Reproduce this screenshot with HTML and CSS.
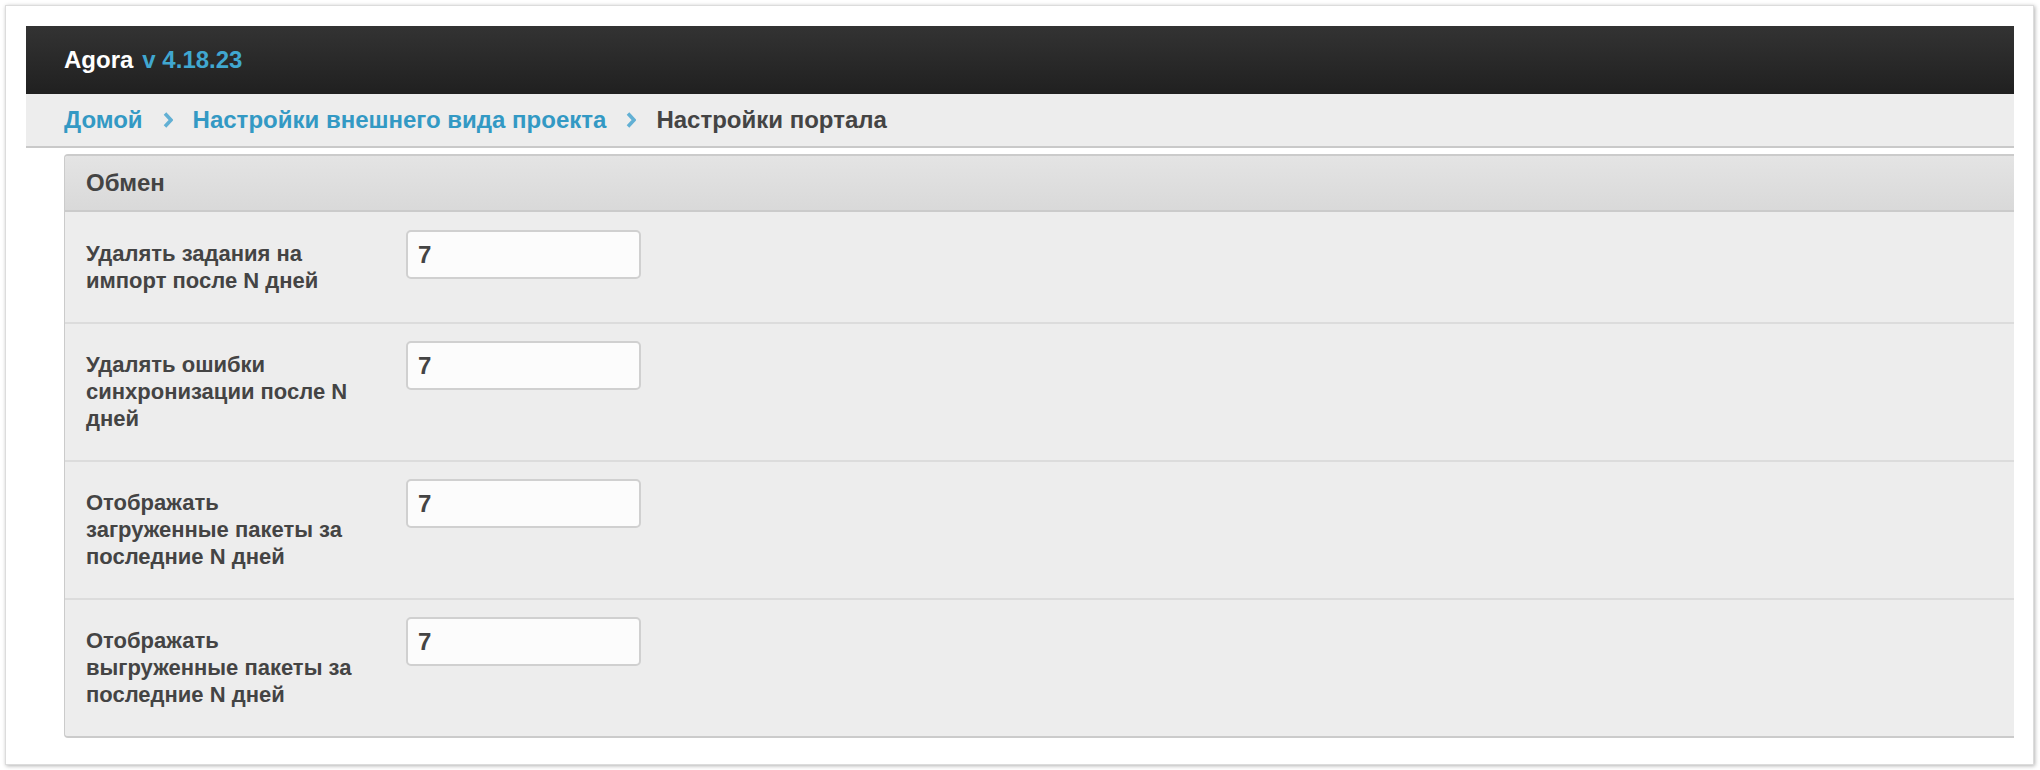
FILE: index.html
```html
<!DOCTYPE html>
<html lang="ru">
<head>
    <meta charset="UTF-8">
    <meta name="viewport" content="width=device-width, initial-scale=1.0">
    <title>Настройки портала</title>
    <link rel="stylesheet" href="styles.css">
</head>
<body>
    <div class="frame">
        <div class="topbar">
            <span class="brand">Agora</span>
            <span class="version">v 4.18.23</span>
        </div>

        <div class="crumbs">
            <a href="#" class="crumb-link">Домой</a>
            <svg class="crumb-sep" width="10" height="16" viewBox="0 0 10 16">
                <path d="M2 1.5 L8 8 L2 14.5" fill="none" stroke="#62b0d4" stroke-width="3.5"/>
            </svg>
            <a href="#" class="crumb-link">Настройки внешнего вида проекта</a>
            <svg class="crumb-sep" width="10" height="16" viewBox="0 0 10 16">
                <path d="M2 1.5 L8 8 L2 14.5" fill="none" stroke="#62b0d4" stroke-width="3.5"/>
            </svg>
            <span class="crumb-current">Настройки портала</span>
        </div>

        <div class="panel">
            <div class="panel-head">Обмен</div>

            <div class="field">
                <label for="importDays">Удалять задания на импорт после N дней</label>
                <input type="text" id="importDays" value="7">
            </div>

            <div class="field">
                <label for="syncDays">Удалять ошибки синхронизации после N дней</label>
                <input type="text" id="syncDays" value="7">
            </div>

            <div class="field">
                <label for="loadedDays">Отображать загруженные пакеты за последние N дней</label>
                <input type="text" id="loadedDays" value="7">
            </div>

            <div class="field">
                <label for="unloadedDays">Отображать выгруженные пакеты за последние N дней</label>
                <input type="text" id="unloadedDays" value="7">
            </div>
        </div>
    </div>
</body>
</html>
```

FILE: styles.css
```css
* {
    margin: 0;
    padding: 0;
    box-sizing: border-box;
}

body {
    font-family: 'Liberation Sans', Arial, Helvetica, sans-serif;
    background: #fff;
    padding: 5px 6px 6px 5px;
}

.frame {
    background: #fff;
    border: 1px solid #dcdcdc;
    box-shadow: 1px 1px 4px rgba(0, 0, 0, 0.3);
    padding: 20px 19px 26px 20px;
}

/* Top dark bar */
.topbar {
    height: 68px;
    background: linear-gradient(#333333, #202020);
    display: flex;
    align-items: center;
    padding-left: 38px;
    font-size: 24px;
    font-weight: bold;
}

.brand {
    color: #fff;
}

.version {
    color: #40a7d0;
    margin-left: 9px;
}

/* Breadcrumbs */
.crumbs {
    height: 54px;
    background: #ededed;
    border-bottom: 2px solid #c9c9c9;
    display: flex;
    align-items: center;
    gap: 20px;
    padding-left: 38px;
    font-size: 24px;
    font-weight: bold;
}

.crumb-link {
    color: #3399c4;
    text-decoration: none;
}

.crumb-sep {
    display: block;
}

.crumb-current {
    color: #444;
}

/* Panel */
.panel {
    margin: 6px 0 0 38px;
    background: #ededed;
    border-top: 2px solid #cbcbcb;
    border-bottom: 2px solid #cbcbcb;
    border-left: 1px solid #cbcbcb;
    border-radius: 4px 0 0 4px;
}

.panel-head {
    height: 56px;
    background: linear-gradient(#e4e4e4, #d9d9d9);
    border-bottom: 2px solid #cbcbcb;
    border-radius: 3px 0 0 0;
    display: flex;
    align-items: center;
    padding-left: 21px;
    font-size: 24px;
    font-weight: bold;
    color: #444;
}

.field {
    display: flex;
    align-items: flex-start;
    padding: 18px 0 28px 21px;
}

.field + .field {
    border-top: 2px solid #dcdcdc;
    padding-top: 17px;
}

.field label {
    flex: 0 0 272px;
    margin-right: 48px;
    margin-top: 10px;
    font-size: 22px;
    line-height: 27px;
    font-weight: bold;
    color: #444;
}

.field input {
    width: 235px;
    height: 49px;
    border: 2px solid #d0d0d0;
    border-radius: 5px;
    background: #fcfcfc;
    padding: 0 10px;
    font-family: inherit;
    font-size: 24px;
    font-weight: bold;
    color: #444;
}

.field input:focus {
    outline: none;
    border-color: #66afe9;
}
```
